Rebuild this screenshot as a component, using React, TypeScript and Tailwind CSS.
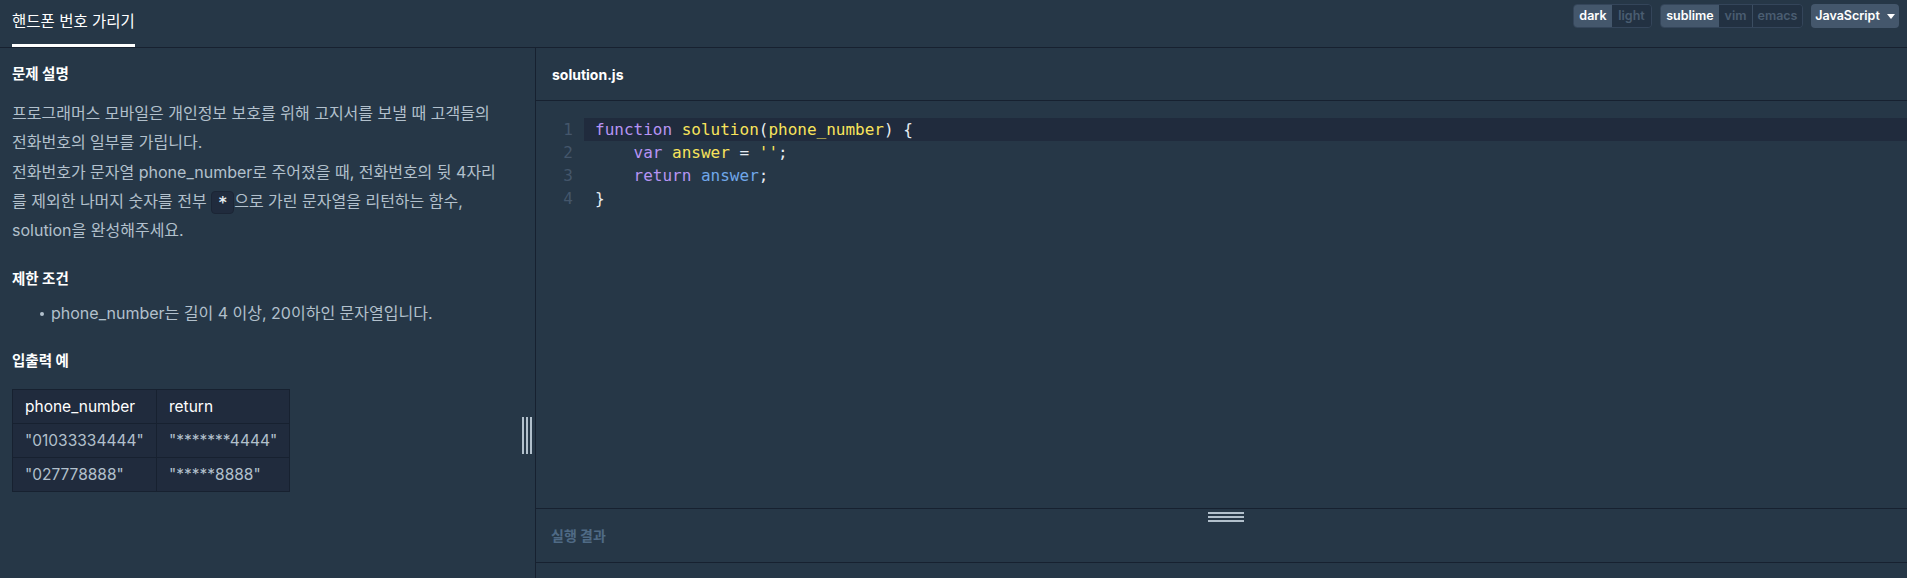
const kw = "text-[#b794f4]";
const yl = "text-[#f8e35b]";
const pn = "text-[#e6edf3]";
const bl = "text-[#70a7ea]";

const codeLines = [
  (
    <>
      <span className={kw}>function</span> <span className={yl}>solution</span>
      <span className={pn}>(</span>
      <span className={yl}>phone_number</span>
      <span className={pn}>) {"{"}</span>
    </>
  ),
  (
    <>
      {"    "}
      <span className={kw}>var</span> <span className={yl}>answer</span> <span className={pn}>=</span>{" "}
      <span className={yl}>''</span>
      <span className={pn}>;</span>
    </>
  ),
  (
    <>
      {"    "}
      <span className={kw}>return</span> <span className={bl}>answer</span>
      <span className={pn}>;</span>
    </>
  ),
  <span className={pn}>{"}"}</span>,
];

function Segment({ label, active, w, divider }: { label: string; active?: boolean; w: string; divider?: boolean }) {
  return (
    <span
      className={`${w} flex items-center justify-center ${
        active ? "bg-[#44576c] text-white" : "bg-[#223142] text-[#4a5d71]"
      } ${divider ? "border-l border-[#3b4d61]" : ""}`}
    >
      {label}
    </span>
  );
}

function Heading({ children, className = "" }: { children: React.ReactNode; className?: string }) {
  return <h3 className={`text-[14.5px] font-bold leading-[22px] text-white ${className}`}>{children}</h3>;
}

export default function App() {
  return (
    <div className="h-[578px] w-full overflow-hidden bg-[#263747] text-[#b2c0cc] font-['Inter','Noto_Sans_CJK_KR',sans-serif] flex flex-col">
      {/* top bar */}
      <header className="h-[48px] shrink-0 border-b border-[#172130] flex justify-between">
        <div className="pl-[12px]">
          <div className="h-[47px] border-b-[3px] border-white flex items-center text-[15.5px] text-white">
            핸드폰 번호 가리기
          </div>
        </div>
        <div className="flex items-start gap-[8px] pt-[4px] pr-[8px] text-[12.5px] font-semibold">
          <div className="flex h-[24px] rounded-[4px] border border-[#34455a] overflow-hidden">
            <Segment label="dark" active w="w-[38px]" />
            <Segment label="light" w="w-[39px]" />
          </div>
          <div className="flex h-[24px] rounded-[4px] border border-[#34455a] overflow-hidden">
            <Segment label="sublime" active w="w-[58px]" />
            <Segment label="vim" w="w-[33px]" />
            <Segment label="emacs" w="w-[50px]" divider />
          </div>
          <div className="w-[88px] h-[24px] rounded-[4px] bg-[#44576c] text-white flex items-center justify-center gap-[7px]">
            JavaScript
            <span className="w-0 h-0 border-x-[4px] border-x-transparent border-t-[5px] border-t-white" />
          </div>
        </div>
      </header>

      <div className="flex-1 min-h-0 flex">
        {/* problem description */}
        <section className="relative w-[536px] shrink-0 border-r border-[#172130] pl-[12px] pt-[15px]">
          <Heading>문제 설명</Heading>
          <p className="mt-[14px] text-[16px] leading-[29.3px] whitespace-nowrap">
            프로그래머스 모바일은 개인정보 보호를 위해 고지서를 보낼 때 고객들의
            <br />
            전화번호의 일부를 가립니다.
            <br />
            전화번호가 문자열 phone_number로 주어졌을 때, 전화번호의 뒷 4자리
            <br />
            를 제외한 나머지 숫자를 전부{" "}
            <code className="inline-block h-[23px] px-[6px] align-middle leading-[23px] rounded-[4px] bg-[#202b3d] border border-[#1b2535] text-[15px] font-bold text-[#e6edf3] font-['DejaVu_Sans_Mono',monospace]">
              *
            </code>
            으로 가린 문자열을 리턴하는 함수,
            <br />
            solution을 완성해주세요.
          </p>

          <Heading className="mt-[23px]">제한 조건</Heading>
          <ul className="mt-[9px] text-[16px] leading-[29.3px]">
            <li className="flex items-center">
              <span className="ml-[28px] mr-[7px] w-[4px] h-[4px] rounded-full bg-[#b2c0cc]" />
              phone_number는 길이 4 이상, 20이하인 문자열입니다.
            </li>
          </ul>

          <Heading className="mt-[21px]">입출력 예</Heading>
          <table className="mt-[17px] border-collapse text-[15.5px]">
            <thead>
              <tr className="h-[34px] bg-[#202b3d] text-white">
                <th className="w-[144px] border border-[#172130] px-[12px] text-left font-normal">phone_number</th>
                <th className="w-[132px] border border-[#172130] px-[12px] text-left font-normal">return</th>
              </tr>
            </thead>
            <tbody>
              {[
                ['"01033334444"', '"*******4444"'],
                ['"027778888"', '"*****8888"'],
              ].map(([a, b]) => (
                <tr key={a} className="h-[34px] bg-[#202b3d]">
                  <td className="border border-[#172130] px-[12px]">{a}</td>
                  <td className="border border-[#172130] px-[12px]">{b}</td>
                </tr>
              ))}
            </tbody>
          </table>

          {/* vertical resize handle */}
          <div className="absolute right-[3px] top-[369px] flex gap-[2px]">
            <span className="w-[2px] h-[37px] bg-[#b2c0cc]" />
            <span className="w-[2px] h-[37px] bg-[#b2c0cc]" />
            <span className="w-[2px] h-[37px] bg-[#b2c0cc]" />
          </div>
        </section>

        {/* editor */}
        <section className="flex-1 min-w-0 flex flex-col">
          <div className="h-[53px] shrink-0 border-b border-[#172130] flex items-center pl-[16px] text-[14px] font-bold text-white">
            solution.js
          </div>
          <div className="flex-1 pt-[17px] font-['DejaVu_Sans_Mono',monospace] text-[16px] leading-[23px]">
            {codeLines.map((line, i) => (
              <div key={i} className="flex h-[23px]">
                <div className="w-[48px] shrink-0 pr-[11px] text-right text-[#44566b]">{i + 1}</div>
                <div className={`flex-1 pl-[11px] whitespace-pre ${i === 0 ? "bg-[#202b3d]" : ""}`}>{line}</div>
              </div>
            ))}
          </div>
          <div className="relative h-[55px] shrink-0 border-y border-[#172130] flex items-center pl-[15px] text-[14px] font-bold text-[#4f6a85]">
            <div className="absolute left-[672px] top-[3px] flex flex-col gap-[2px]">
              <span className="w-[36px] h-[2px] bg-[#b2c0cc]" />
              <span className="w-[36px] h-[2px] bg-[#b2c0cc]" />
              <span className="w-[36px] h-[2px] bg-[#b2c0cc]" />
            </div>
            실행 결과
          </div>
          <div className="h-[15px] shrink-0" />
        </section>
      </div>
    </div>
  );
}
